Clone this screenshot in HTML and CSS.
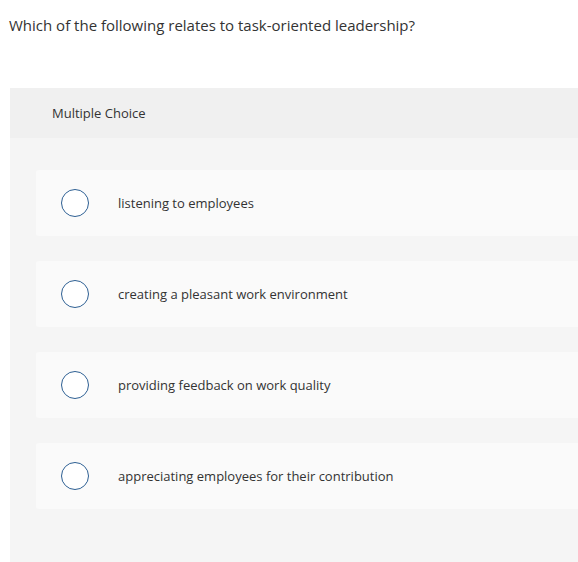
FILE: index.html
```html
<!DOCTYPE html>
<html>
<head>
<meta charset="utf-8">
<link rel="stylesheet" href="styles.css">
</head>
<body>
<p class="question">Which of the following relates to task-oriented leadership?</p>
<div class="panel">
  <div class="panel-head">Multiple Choice</div>
  <div class="options">
    <div class="option"><span class="radio"></span><span class="label">listening to employees</span></div>
    <div class="option"><span class="radio"></span><span class="label">creating a pleasant work environment</span></div>
    <div class="option"><span class="radio"></span><span class="label">providing feedback on work quality</span></div>
    <div class="option"><span class="radio"></span><span class="label">appreciating employees for their contribution</span></div>
  </div>
</div>
</body>
</html>
```
FILE: styles.css
```css
html, body {
  margin: 0;
  padding: 0;
  background: #fff;
}
body {
  font-family: "Open Sans", "Liberation Sans", sans-serif;
  color: #333;
}
.question {
  margin: 0;
  padding: 15px 0 0 9px;
  height: 88px;
  box-sizing: border-box;
  font-size: 15px;
  line-height: 20px;
  color: #333;
}
.panel {
  margin-left: 10px;
  background: #f5f5f5;
  height: 474px;
}
.panel-head {
  background: #f0f0f0;
  height: 50px;
  box-sizing: border-box;
  padding-left: 42px;
  display: flex;
  align-items: center;
  font-size: 13px;
  color: #333;
}
.options {
  display: flex;
  flex-direction: column;
  gap: 25px;
  padding: 32px 0 0 26px;
}
.option {
  background: #fafafa;
  height: 66px;
  border-radius: 3px 0 0 3px;
  display: flex;
  align-items: center;
  padding-left: 25px;
}
.radio {
  width: 26px;
  height: 26px;
  border: 1.5px solid #2d5f93;
  border-radius: 50%;
  background: #fff;
  flex: none;
}
.label {
  margin-left: 29px;
  font-size: 13px;
  color: #333;
}
```
